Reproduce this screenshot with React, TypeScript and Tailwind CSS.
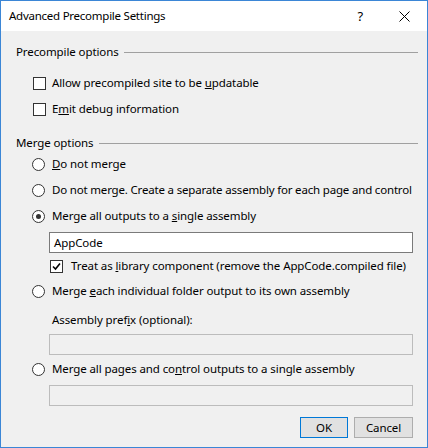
import React from "react";

const font = "font-['Noto_Sans',sans-serif]";

function CheckBox({ checked }: { checked?: boolean }) {
  return (
    <span className="flex h-[13px] w-[13px] shrink-0 items-center justify-center border border-[#333333] bg-white">
      {checked && (
        <svg width="9" height="9" viewBox="0 0 9 9">
          <path d="M1 4.5 L3.5 7 L8 1.5" fill="none" stroke="#000" strokeWidth="1.6" />
        </svg>
      )}
    </span>
  );
}

function Radio({ checked }: { checked?: boolean }) {
  return (
    <span className="flex h-[13px] w-[13px] shrink-0 items-center justify-center rounded-full border border-[#333333] bg-white">
      {checked && <span className="h-[5px] w-[5px] rounded-full bg-[#333333]" />}
    </span>
  );
}

function GroupHeader({ label, className }: { label: string; className?: string }) {
  return (
    <div className={`flex h-[18px] items-center pl-[15px] pr-[9px] ${className ?? ""}`}>
      <span>{label}</span>
      <span className="ml-[5px] h-px flex-1 bg-[#a0a0a0]" />
    </div>
  );
}

function TextBox({ value, disabled, className }: { value?: string; disabled?: boolean; className?: string }) {
  return (
    <div
      className={`ml-[48px] flex h-[21px] w-[364px] items-center pl-[4px] ${
        disabled ? "border border-[#bcbcbc] bg-[#f0f0f0]" : "border border-[#7a7a7a] bg-white"
      } ${className ?? ""}`}
    >
      {value ?? "\u00a0"}
    </div>
  );
}

export default function App() {
  return (
    <div
      className={`flex h-[448px] w-[428px] flex-col border border-[#3b86d6] bg-[#f0f0f0] text-[11.5px] leading-none tracking-[-0.1px] whitespace-nowrap text-black ${font}`}
    >
      {/* title bar */}
      <div className="flex h-[30px] shrink-0 items-center bg-white pl-[8px] text-[11.5px] tracking-[-0.25px]">
        <span className="flex-1">Advanced Precompile Settings</span>
        <span className="mr-[36px] text-[13px]">?</span>
        <svg width="11" height="11" viewBox="0 0 11 11" className="mr-[17px]">
          <path d="M0.5 0.5 L10.5 10.5 M10.5 0.5 L0.5 10.5" stroke="#000" strokeWidth="1" />
        </svg>
      </div>

      <GroupHeader label="Precompile options" className="mt-[12px]" />

      <div className="mt-[10px] flex h-[24px] items-center pl-[32px]">
        <CheckBox />
        <span className="ml-[6px]">
          Allow precompiled site to be <u>u</u>pdatable
        </span>
      </div>
      <div className="mt-[2px] flex h-[24px] items-center pl-[32px]">
        <CheckBox />
        <span className="ml-[6px]">
          E<u>m</u>it debug information
        </span>
      </div>

      <GroupHeader label="Merge options" className="mt-[13px]" />

      <div className="flex h-[24px] items-center pl-[31px]">
        <Radio />
        <span className="ml-[7px]">
          <u>D</u>o not merge
        </span>
      </div>
      <div className="mt-[2px] flex h-[24px] items-center pl-[31px]">
        <Radio />
        <span className="ml-[7px] tracking-[-0.18px]">Do not merge. Create a separate assembly for each page and control</span>
      </div>
      <div className="mt-[2px] flex h-[24px] items-center pl-[31px]">
        <Radio checked />
        <span className="ml-[7px]">
          Merge all outputs to a <u>s</u>ingle assembly
        </span>
      </div>

      <TextBox value="AppCode" className="mt-[4px]" />

      <div className="mt-[1px] flex h-[24px] items-center pl-[49px]">
        <CheckBox checked />
        <span className="ml-[8px]">
          Treat as <u>l</u>ibrary component (remove the AppCode.compiled file)
        </span>
      </div>

      <div className="mt-[1px] flex h-[24px] items-center pl-[31px]">
        <Radio />
        <span className="ml-[7px]">
          Merge <u>e</u>ach individual folder output to its own assembly
        </span>
      </div>

      <div className="mt-[5px] flex h-[24px] items-center pl-[51px]">
        <span>
          Assembly pref<u>i</u>x (optional):
        </span>
      </div>

      <TextBox disabled className="mt-[2px]" />

      <div className="mt-[2px] flex h-[24px] items-center pl-[31px]">
        <Radio />
        <span className="ml-[7px]">
          Merge all pages and co<u>n</u>trol outputs to a single assembly
        </span>
      </div>

      <TextBox disabled className="mt-[4px]" />

      <div className="mt-[11px] flex justify-end gap-[6px] pr-[14px]">
        <button className="flex h-[21px] w-[48px] items-center justify-center border border-[#0078d7] bg-[#e1e1e1]">
          OK
        </button>
        <button className="flex h-[21px] w-[59px] items-center justify-center border border-[#adadad] bg-[#e1e1e1]">
          Cancel
        </button>
      </div>
    </div>
  );
}
